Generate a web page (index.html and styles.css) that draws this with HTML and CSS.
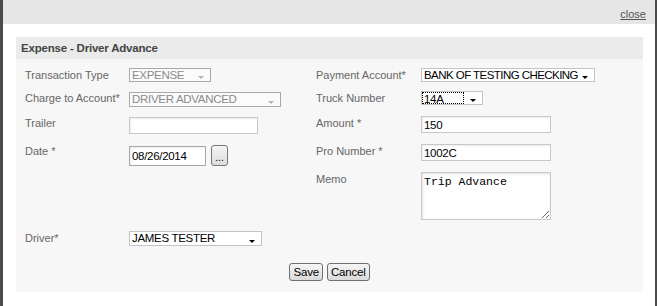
FILE: index.html
```html
<!DOCTYPE html>
<html lang="en">
<head>
    <meta charset="UTF-8">
    <title>Expense - Driver Advance</title>
    <link rel="stylesheet" href="styles.css">
</head>
<body>
    <div class="dialog">
        <div class="topbar"><a href="#" class="close">close</a></div>

        <div class="panel">
            <div class="panel-title">Expense - Driver Advance</div>
            <div class="panel-body">
                <div class="form-grid">
                    <label>Transaction Type</label>
                    <div class="select disabled sel-type">EXPENSE<span class="arrow"></span></div>
                    <label>Payment Account*</label>
                    <div class="select sel-pay">BANK OF TESTING CHECKING<span class="arrow"></span></div>

                    <label>Charge to Account*</label>
                    <div class="select disabled sel-charge">DRIVER ADVANCED<span class="arrow"></span></div>
                    <label>Truck Number</label>
                    <div class="select sel-truck"><span class="focus">14A</span><span class="arrow"></span></div>

                    <label>Trailer</label>
                    <input type="text" class="input in-trailer">
                    <label>Amount *</label>
                    <input type="text" class="input in-amount" value="150">

                    <label>Date *</label>
                    <div class="date-field">
                        <input type="text" class="input in-date" value="08/26/2014">
                        <button class="dots">...</button>
                    </div>
                    <label>Pro Number *</label>
                    <input type="text" class="input in-pro" value="1002C">

                    <span></span>
                    <span></span>
                    <label>Memo</label>
                    <textarea class="memo">Trip Advance</textarea>

                    <label>Driver*</label>
                    <div class="select sel-driver">JAMES TESTER<span class="arrow"></span></div>
                </div>

                <div class="actions">
                    <button class="btn">Save</button>
                    <button class="btn">Cancel</button>
                </div>
            </div>
        </div>
    </div>
</body>
</html>
```

FILE: styles.css
```css
body {
    margin: 0;
    font-family: "Liberation Sans", Arial, sans-serif;
    background-color: #fff;
}

.dialog {
    width: 652px;
    height: 306px;
    border-left: 3px solid #4b4b4b;
    border-right: 2px solid #4b4b4b;
    background-color: #fff;
}

.topbar {
    height: 24px;
    background-color: #e6e6e6;
    display: flex;
    justify-content: flex-end;
    align-items: center;
    padding: 0 9px;
}

.close {
    color: #555;
    font-size: 11px;
    padding-top: 4px;
}

.panel {
    margin: 13px 12px 0 13px;
}

.panel-title {
    height: 22px;
    line-height: 22px;
    padding-left: 5px;
    background-color: #ebebeb;
    color: #444;
    font-weight: bold;
    font-size: 11.5px;
    letter-spacing: -0.2px;
}

.panel-body {
    background-color: #f7f7f7;
    padding: 9px 9px 11px 9px;
}

.form-grid {
    display: grid;
    grid-template-columns: 104px 187px 105px 1fr;
    grid-template-rows: 23px 25px 28px 28px 59px 32px;
    align-items: start;
}

.form-grid label {
    color: #666;
    font-size: 11px;
    line-height: 14px;
    white-space: nowrap;
}

/* select look-alikes */
.select {
    position: relative;
    box-sizing: border-box;
    height: 14px;
    border: 1px solid #c4c4c4;
    background-color: #fff;
    color: #000;
    font-size: 11.5px;
    letter-spacing: -0.3px;
    line-height: 12px;
    padding-left: 2px;
    white-space: nowrap;
}

.select .arrow {
    position: absolute;
    right: 6px;
    bottom: 2px;
    width: 0;
    height: 0;
    border-left: 3px solid transparent;
    border-right: 3px solid transparent;
    border-top: 3px solid #000;
}

.select.disabled {
    border-color: #a9a9a9;
    background-color: #fbfbfb;
    color: #8a8a8a;
}

.select.disabled .arrow {
    border-top-color: #b5b5b5;
}

.sel-type { width: 82px; }
.sel-charge { width: 152px; height: 15px; margin-top: 1px; }
.sel-pay { width: 174px; letter-spacing: -0.55px; }
.sel-truck { width: 62px; }
.sel-driver { width: 133px; height: 15px; }

.sel-truck .focus {
    display: inline-block;
    box-sizing: border-box;
    width: 42px;
    height: 12px;
    margin-left: -2px;
    padding-left: 1px;
    border: 1px dotted #000;
}

.input {
    box-sizing: border-box;
    height: 17px;
    border: 1px solid #c8c8c8;
    background-color: #fff;
    box-shadow: inset 1px 1px 2px #ececec;
    font-family: inherit;
    font-size: 11.5px;
    letter-spacing: -0.3px;
    color: #000;
    padding: 0 2px;
    margin: 0;
}

.in-trailer { width: 129px; margin-top: 1px; }
.in-amount { width: 130px; }
.in-pro { width: 130px; }

.date-field {
    display: flex;
    align-items: flex-start;
    gap: 5px;
}

.in-date {
    width: 77px;
    height: 20px;
    margin-top: 2px;
    border-color: #a8a8a8;
}

.dots {
    box-sizing: border-box;
    width: 17px;
    height: 21px;
    margin-top: 1px;
    padding: 0;
    border: 1px solid #777;
    border-radius: 3px;
    background: linear-gradient(#f4f4f4, #dcdcdc);
    font-size: 10px;
    line-height: 12px;
    padding-top: 4px;
}

.memo {
    box-sizing: border-box;
    width: 130px;
    height: 48px;
    margin: 0;
    border: 1px solid #c8c8c8;
    box-shadow: inset 1px 1px 3px #e2e2e2;
    font-family: "Liberation Mono", "Courier New", monospace;
    font-size: 11.5px;
    line-height: 13px;
    padding: 2px 2px;
    resize: vertical;
}

.actions {
    display: flex;
    justify-content: center;
    gap: 4px;
}

.btn {
    box-sizing: border-box;
    height: 18px;
    padding: 0 3px;
    border: 1px solid #6f6f6f;
    border-radius: 3px;
    background: linear-gradient(#f6f6f6, #dadada);
    font-family: inherit;
    font-size: 11.5px;
    letter-spacing: -0.2px;
    line-height: 14px;
    color: #000;
}
```
